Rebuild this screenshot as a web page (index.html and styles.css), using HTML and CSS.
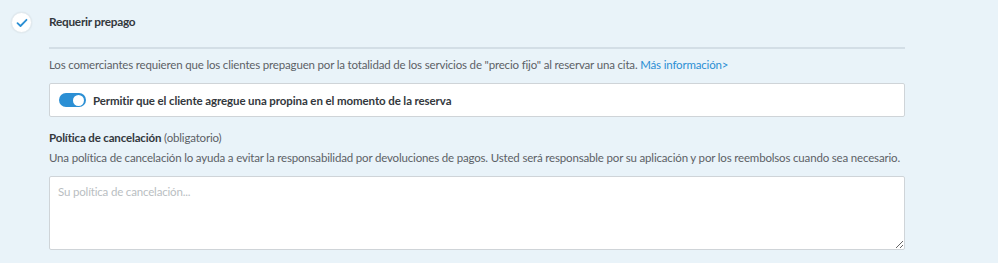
FILE: index.html
```html
<!DOCTYPE html>
<html lang="es">
<head>
  <meta charset="UTF-8">
  <title>Requerir prepago</title>
  <link rel="stylesheet" href="styles.css">
</head>
<body>
  <div class="setting-row">
    <div class="check-circle">
      <svg width="12" height="10" viewBox="0 0 12 10" fill="none" stroke="#2b8fd4" stroke-width="1.8" stroke-linecap="round" stroke-linejoin="round">
        <path d="M1.5 5.2 L4.5 8 L10.5 1.8"></path>
      </svg>
    </div>
    <div class="setting-body">
      <div class="setting-title">Requerir prepago</div>
      <div class="divider"></div>
      <p class="help">Los comerciantes requieren que los clientes prepaguen por la totalidad de los servicios de "precio fijo" al reservar una cita. <a href="#" class="more">Más información&gt;</a></p>

      <div class="toggle-box">
        <span class="toggle on"><span class="knob"></span></span>
        <span class="toggle-label">Permitir que el cliente agregue una propina en el momento de la reserva</span>
      </div>

      <div class="field-title"><strong>Política de cancelación</strong> (obligatorio)</div>
      <p class="help tight">Una política de cancelación lo ayuda a evitar la responsabilidad por devoluciones de pagos. Usted será responsable por su aplicación y por los reembolsos cuando sea necesario.</p>
      <textarea class="policy" placeholder="Su política de cancelación..."></textarea>
    </div>
  </div>
</body>
</html>
```

FILE: styles.css
```css
* {
  box-sizing: border-box;
}
body {
  margin: 0;
  background: #e9f3f9;
  font-family: Lato, sans-serif;
  font-size: 11.5px;
  letter-spacing: -0.17px;
  color: #5c6166;
}
.setting-row {
  display: flex;
  padding: 12px 0 0 11px;
}
.check-circle {
  width: 21px;
  height: 21px;
  border-radius: 50%;
  background: #fff;
  border: 1px solid #e1e9ee;
  box-shadow: 0 0 2px rgba(0, 0, 0, 0.08);
  display: flex;
  justify-content: center;
  align-items: center;
  margin-right: 17px;
  flex: none;
}
.setting-body {
  width: 856px;
}
.setting-title {
  height: 20px;
  line-height: 20px;
  font-size: 11.8px;
  letter-spacing: -0.25px;
  font-weight: bold;
  color: #33383d;
}
.divider {
  margin-top: 15px;
  height: 2px;
  background: #d3dee6;
}
.help {
  margin: 7px 0 0;
  line-height: 18px;
  white-space: nowrap;
}
.help.tight {
  margin-top: 2px;
}
.more {
  color: #2b8fd4;
  text-decoration: none;
}
.toggle-box {
  margin-top: 9px;
  height: 34px;
  background: #fff;
  border: 1px solid #cfd4d8;
  border-radius: 2px;
  display: flex;
  align-items: center;
  padding-left: 9px;
}
.toggle {
  width: 27px;
  height: 14px;
  border-radius: 7px;
  background: #2b8fd4;
  display: flex;
  justify-content: flex-end;
  align-items: center;
  padding: 0 2px;
  margin-right: 7px;
}
.knob {
  width: 11px;
  height: 11px;
  border-radius: 50%;
  background: #fff;
}
.toggle-label {
  font-weight: bold;
  letter-spacing: -0.1px;
  color: #33383d;
}
.field-title {
  margin-top: 12px;
  line-height: 18px;
  color: #5c6166;
}
.field-title strong {
  font-weight: bold;
  letter-spacing: -0.15px;
  color: #33383d;
}
.policy {
  display: block;
  margin-top: 9px;
  width: 856px;
  height: 74px;
  border: 1px solid #cfd4d8;
  border-radius: 2px;
  background: #fff;
  padding: 8px;
  font-family: Lato, sans-serif;
  font-size: 11.5px;
  letter-spacing: -0.17px;
  color: #33383d;
}
.policy::placeholder {
  color: #b9bec2;
}
```
